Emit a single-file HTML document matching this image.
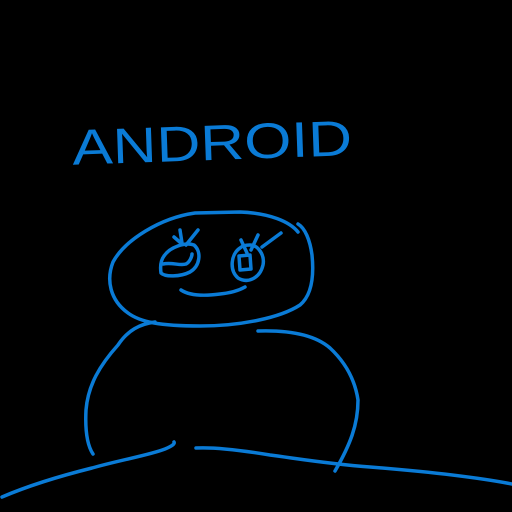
<!DOCTYPE html>
<html><head><meta charset="utf-8"><style>
html,body{margin:0;padding:0;background:#000;width:512px;height:512px;overflow:hidden}
svg{display:block}
</style></head><body>
<svg width="512" height="512" viewBox="0 0 512 512" xmlns="http://www.w3.org/2000/svg">
<rect width="512" height="512" fill="#000"/>
<text x="72" y="160" font-family="Liberation Sans, sans-serif" font-size="50" fill="#0a7bd6" textLength="280" lengthAdjust="spacingAndGlyphs" transform="rotate(-2 210 140)">ANDROID</text>
<g fill="none" stroke="#0a7bd6" stroke-width="3.5" stroke-linecap="round" stroke-linejoin="round">
<path d="M298,232 C290,222 270,213 240,212 L195,213 C160,218 125,240 113,262 C106,280 110,300 128,313 C140,322 160,326 200,326 C240,326 280,318 300,305 C312,295 314,275 312,255 C310,240 305,228 298,224"/>
<path d="M164,256 C170,247 185,242 194,245 C202,252 200,266 190,272 C180,277 165,277 161,273 C160,266 161,260 164,256 Z"/>
<path d="M163,264 C172,262 180,266 186,264 C190,262 192,256 192,254"/>
<path d="M180,230 L182,243 M174,237 L182,244 M198,230 L186,245"/>
<path d="M240,248 C231,254 229,270 238,278 C248,284 260,278 263,265 C265,255 258,245 250,245 C246,245 242,246 240,248"/>
<path d="M239,256 L250,255 L251,269 L240,270 Z"/>
<path d="M241,240 L247,253 M258,235 L251,250 M281,233 L262,247"/>
<path d="M181,290 C190,296 205,296 220,294 C230,293 238,291 245,287"/>
<path d="M155,322 C140,324 128,330 118,345 C100,365 88,385 86,410 C85,430 87,445 93,454"/>
<path d="M258,331 C290,330 315,335 330,348 C345,362 355,380 358,400 C358,425 350,445 335,471"/>
<path d="M2,497 C30,485 60,476 92,468 C120,460 150,455 165,449 C172,446 175,444 174,442"/>
<path d="M196,448 C215,447 240,450 270,455 C300,459 330,464 370,467 C420,471 470,476 512,484"/>
</g>
</svg>
</body></html>
